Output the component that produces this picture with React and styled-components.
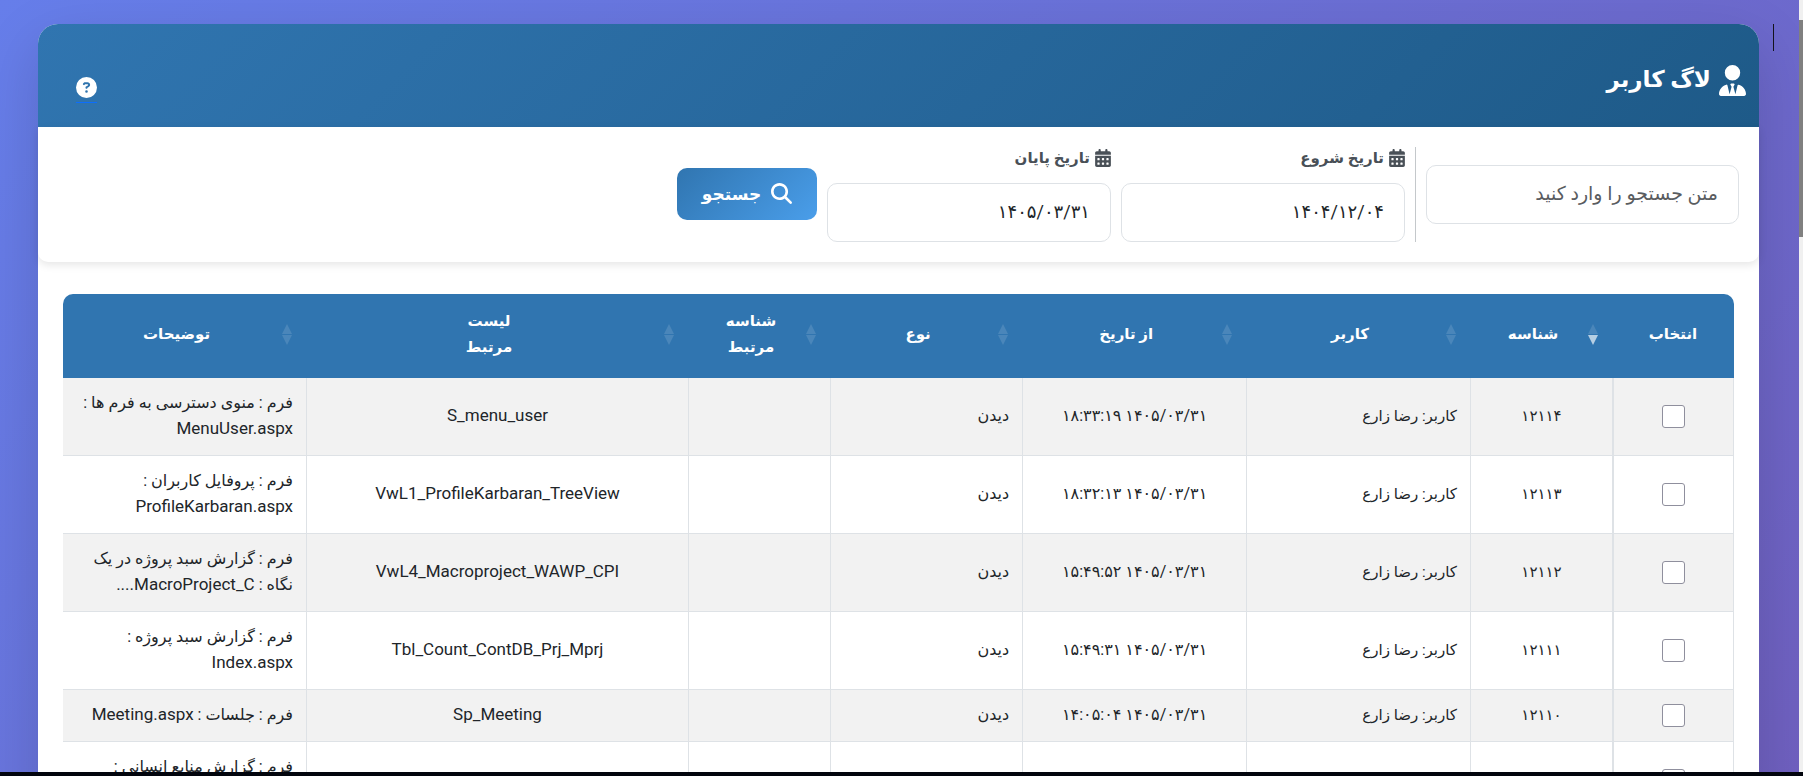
import React, { useState } from 'react';
import styled, { createGlobalStyle } from 'styled-components';
import { FaUserTie, FaCalendarDays, FaMagnifyingGlass, FaCircleQuestion } from 'react-icons/fa6';

const GlobalStyle = createGlobalStyle`
  * {
    box-sizing: border-box;
  }

  body {
    margin: 0;
    color: #212529;
    font-family: Roboto, 'DejaVu Sans', sans-serif;
    font-size: 16px;
    line-height: 26px;
  }

  button, input {
    font-family: inherit;
  }
`;

const Shell = styled.div`
  display: flex;
  flex-direction: column;
  height: 100vh;
  overflow: hidden;
  background: #02050d;
`;

const Viewport = styled.div`
  display: flex;
  flex: 1;
  min-height: 0;
  margin-bottom: 4px;
`;

const Page = styled.div`
  display: flex;
  flex: 1;
  gap: 14px;
  min-width: 0;
  padding: 24px 25px 0 38px;
  overflow: hidden;
  background: linear-gradient(135deg, #667eea 0%, #764ba2 100%) 0 0 / 100% 2600px;
`;

const Divider = styled.div`
  width: 1px;
  height: 27px;
  background: #14141c;
`;

const ScrollTrack = styled.div`
  width: 4px;
  padding-top: 20px;
  background: #f0f0f0;
`;

const ScrollThumb = styled.div`
  height: 217px;
  background: #808080;
`;

const Card = styled.main`
  flex: 1;
  min-width: 0;
  height: max-content;
  border-radius: 20px;
  background: white;
  box-shadow: 0 20px 60px rgba(0, 0, 0, 0.15);
`;

const Header = styled.header`
  display: flex;
  align-items: center;
  justify-content: space-between;
  height: 103px;
  padding: 9px 13px 0 38px;
  border-radius: 20px 20px 0 0;
  background: linear-gradient(135deg, #3075b0 0%, #1e5a88 100%);
  color: white;
`;

const Title = styled.h1`
  display: flex;
  align-items: center;
  gap: 8px;
  margin: 0;
  font-size: 23px;
  font-weight: 700;
`;

const TitleIcon = styled(FaUserTie)`
  width: 27px;
  height: 31px;
`;

const HelpLink = styled.a`
  display: flex;
  margin-top: 20px;
  padding-bottom: 4px;
  border-bottom: 1px solid #0d6efd;
  color: white;
`;

const Filters = styled.form`
  display: flex;
  align-items: center;
  gap: 10px;
  padding: 20px;
  border-radius: 0 0 10px 10px;
  box-shadow: 0 3px 8px rgba(0, 0, 0, 0.1);
`;

const Field = styled.div`
  flex: 0 1 ${props => props.$width};
`;

const Label = styled.label`
  display: flex;
  align-items: center;
  gap: 5px;
  margin-bottom: 14px;
  color: #495057;
  font-size: 15px;
  font-weight: 600;
  line-height: 22px;
`;

const LabelIcon = styled(FaCalendarDays)`
  width: 16px;
  height: 18px;
`;

const TextInput = styled.input`
  display: block;
  width: 100%;
  height: 59px;
  padding: 0 20px 3px;
  border: 1px solid #dee2e6;
  border-radius: 10px;
  background: white;
  color: #212529;
  font-size: 18px;

  &::placeholder {
    color: #595c5f;
    font-size: 19px;
    opacity: 1;
  }
`;

const Separator = styled.div`
  align-self: stretch;
  width: 1px;
  background: #c4c8cb;
`;

const SearchButton = styled.button`
  display: flex;
  align-items: center;
  justify-content: center;
  gap: 10px;
  width: 140px;
  height: 52px;
  margin-bottom: 2px;
  border: none;
  border-radius: 10px;
  background: linear-gradient(135deg, #3075b0 0%, #4a9eea 100%);
  color: white;
  cursor: pointer;
  font-size: 17px;
  font-weight: 600;
`;

const TableWrap = styled.div`
  margin: 32px 25px 25px;
  overflow: hidden;
  border-radius: 10px 10px 0 0;
`;

const Table = styled.table`
  width: 100%;
  table-layout: fixed;
  border-collapse: separate;
  border-spacing: 0;
`;

const HeadCell = styled.th`
  width: ${props => props.$width};
  height: 84px;
  padding: ${props => (props.$sortable ? '0 14px 4px 8px' : '0 0 4px')};
  background: #3075b0;
  color: white;
  font-size: 15px;
  font-weight: 700;
`;

const HeadContent = styled.div`
  display: flex;
  align-items: center;
`;

const HeadText = styled.span`
  flex: 1;
  white-space: pre-line;
`;

const Row = styled.tr`
  &:nth-child(odd) {
    background: #f2f2f2;
  }
`;

const Cell = styled.td`
  padding: 12px 13px 13px;
  border-bottom: 1px solid #dee2e6;
  border-left: ${props => props.$edge || '1px'} solid #dee2e6;
  font-size: ${props => (props.$compact ? '15px' : '16px')};
  text-align: ${props => props.$align || 'center'};

  &:first-child {
    border-right: 1px solid #dee2e6;
  }

  &:last-child {
    border-left: none;
  }
`;

const Latin = styled.bdi`
  font-size: 17px;
  line-height: 1;
`;

const Checkbox = styled.input`
  appearance: none;
  display: block;
  width: 23px;
  height: 23px;
  margin: 0 auto;
  border: 1px solid #8f8f9d;
  border-radius: 3px;
  background: white;

  &:checked {
    background: #3075b0;
  }
`;

const columns = [
  { title: 'انتخاب', width: '7.3%' },
  { title: 'شناسه', width: '8.5%', sortable: true, sorted: true },
  { title: 'کاربر', width: '13.4%', sortable: true },
  { title: 'از تاریخ', width: '13.4%', sortable: true },
  { title: 'نوع', width: '11.5%', sortable: true },
  { title: 'شناسه\nمرتبط', width: '8.5%', sortable: true },
  { title: 'لیست\nمرتبط', width: '22.86%', sortable: true },
  { title: 'توضیحات', width: '14.54%', sortable: true },
];

const logs = [
  { id: '۱۲۱۱۴', time: '۱۸:۳۳:۱۹', list: 'S_menu_user', form: 'منوی دسترسی به فرم ها', file: 'MenuUser.aspx' },
  { id: '۱۲۱۱۳', time: '۱۸:۳۲:۱۳', list: 'VwL1_ProfileKarbaran_TreeView', form: 'پروفایل کاربران', file: 'ProfileKarbaran.aspx' },
  { id: '۱۲۱۱۲', time: '۱۵:۴۹:۵۲', list: 'VwL4_Macroproject_WAWP_CPI', form: 'گزارش سبد پروژه در یک نگاه', file: 'MacroProject_C....' },
  { id: '۱۲۱۱۱', time: '۱۵:۴۹:۳۱', list: 'Tbl_Count_ContDB_Prj_Mprj', form: 'گزارش سبد پروژه', file: 'Index.aspx' },
  { id: '۱۲۱۱۰', time: '۱۴:۰۵:۰۴', list: 'Sp_Meeting', form: 'جلسات', file: 'Meeting.aspx' },
  { id: '۱۲۱۰۹', time: '۱۴:۰۴:۳۸', list: 'Sp_Resource', form: 'گزارش منابع انسانی', file: 'HumanResource.aspx' },
];

const SortIcon = ({ sorted }) => (
  <svg width="10" height="21" viewBox="0 0 10 21" fill="white" aria-hidden="true">
    <path d="M5 0L10 10H0Z" opacity="0.13" />
    <path d="M0 11H10L5 21Z" opacity={sorted ? 0.65 : 0.13} />
  </svg>
);

const App = () => {
  const [text, setText] = useState('');
  const [from, setFrom] = useState('۱۴۰۴/۱۲/۰۴');
  const [to, setTo] = useState('۱۴۰۵/۰۳/۳۱');

  return (
    <Shell>
      <GlobalStyle />
      <Viewport>
        <Page dir="rtl" lang="fa">
          <Divider />
          <Card>
            <Header>
              <Title>
                <TitleIcon />
                لاگ کاربر
              </Title>
              <HelpLink href="#help" aria-label="راهنما">
                <FaCircleQuestion size={21} />
              </HelpLink>
            </Header>
            <Filters onSubmit={e => e.preventDefault()}>
              <Field $width="313px">
                <TextInput
                  aria-label="متن جستجو"
                  placeholder="متن جستجو را وارد کنید"
                  value={text}
                  onChange={e => setText(e.target.value)}
                />
              </Field>
              <Separator />
              <Field $width="284px">
                <Label htmlFor="from">
                  <LabelIcon />
                  تاریخ شروع
                </Label>
                <TextInput id="from" value={from} onChange={e => setFrom(e.target.value)} />
              </Field>
              <Field $width="284px">
                <Label htmlFor="to">
                  <LabelIcon />
                  تاریخ پایان
                </Label>
                <TextInput id="to" value={to} onChange={e => setTo(e.target.value)} />
              </Field>
              <SearchButton type="submit">
                <FaMagnifyingGlass size={21} />
                جستجو
              </SearchButton>
            </Filters>
            <TableWrap>
              <Table>
                <thead>
                  <tr>
                    {columns.map(col => (
                      <HeadCell key={col.title} scope="col" $width={col.width} $sortable={col.sortable}>
                        <HeadContent>
                          {col.sortable && <SortIcon sorted={col.sorted} />}
                          <HeadText>{col.title}</HeadText>
                        </HeadContent>
                      </HeadCell>
                    ))}
                  </tr>
                </thead>
                <tbody>
                  {logs.map(log => (
                    <Row key={log.id}>
                      <Cell $edge="2px">
                        <Checkbox type="checkbox" aria-label={log.id} />
                      </Cell>
                      <Cell $compact>{log.id}</Cell>
                      <Cell $compact $align="right">کاربر: رضا زارع</Cell>
                      <Cell>۱۴۰۵/۰۳/۳۱ {log.time}</Cell>
                      <Cell $align="right">دیدن</Cell>
                      <Cell />
                      <Cell><Latin>{log.list}</Latin></Cell>
                      <Cell $align="right">
                        {`فرم : ${log.form} : `}
                        <Latin dir="rtl">{log.file}</Latin>
                      </Cell>
                    </Row>
                  ))}
                </tbody>
              </Table>
            </TableWrap>
          </Card>
        </Page>
        <ScrollTrack>
          <ScrollThumb />
        </ScrollTrack>
      </Viewport>
    </Shell>
  );
};

export default App;
